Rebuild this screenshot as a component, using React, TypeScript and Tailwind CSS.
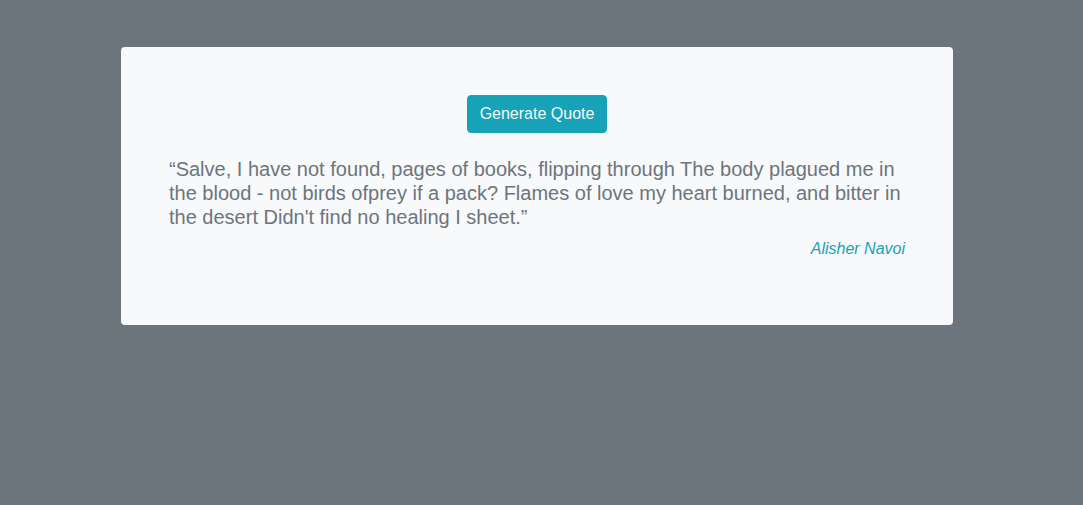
export default function App() {
  return (
    <div className="min-h-screen bg-[#6c757d] py-[47px] pr-[9px] font-['Liberation_Sans',Arial,sans-serif] text-base leading-6">
      <main className="mx-auto w-full max-w-[832px] rounded bg-[#f8f9fa] p-12 text-[#6c757d]">
        <div className="mb-6 text-center">
          <button
            type="button"
            className="rounded border border-[#17a2b8] bg-[#17a2b8] px-3 py-1.5 text-[#f8f9fa]"
          >
            Generate Quote
          </button>
        </div>
        <h1 className="mb-2 text-xl leading-6">
          “Salve, I have not found, pages of books, flipping through The body
          plagued me in the blood - not birds ofprey if a pack? Flames of love
          my heart burned, and bitter in the desert Didn't find no healing I
          sheet.”
        </h1>
        <p className="mb-4 text-right text-[#17a2b8] italic">Alisher Navoi</p>
      </main>
    </div>
  );
}
